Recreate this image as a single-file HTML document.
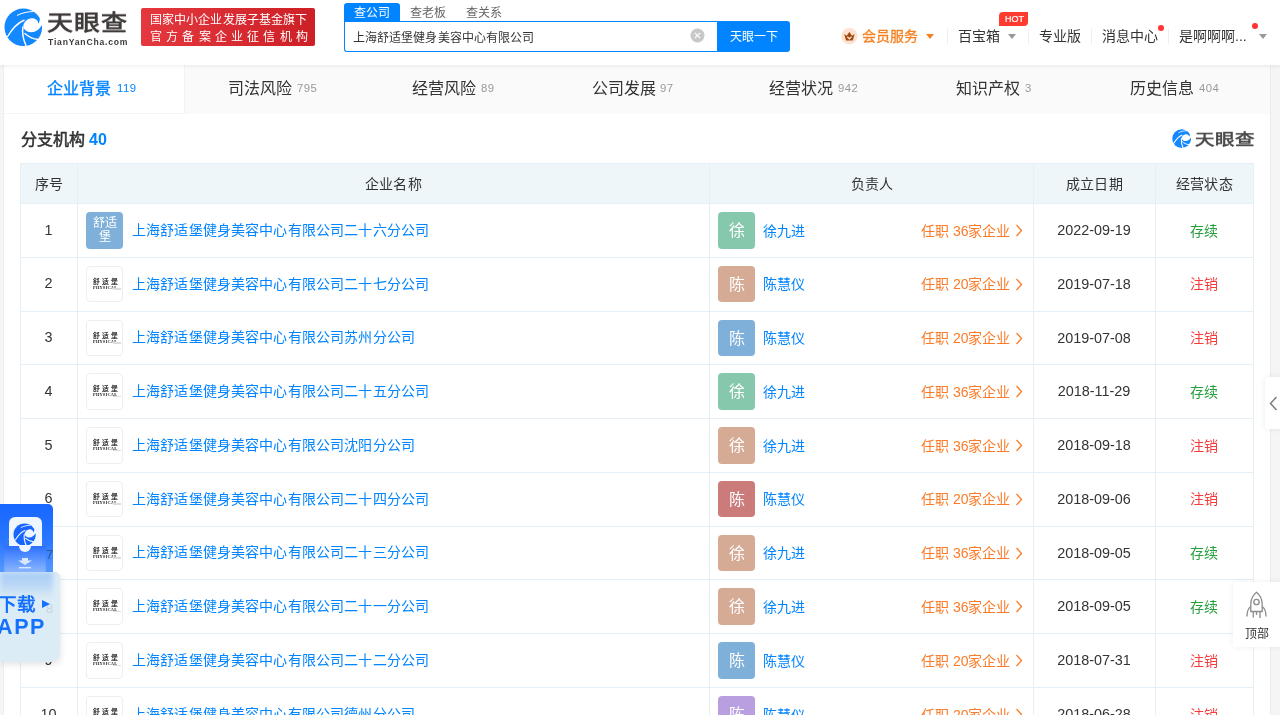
<!DOCTYPE html>
<html lang="zh-CN">
<head>
<meta charset="utf-8">
<style>
*{box-sizing:border-box;margin:0;padding:0}
html,body{width:1280px;height:715px;overflow:hidden}
body{position:relative;background:#f5f5f5;font-family:"Liberation Sans",sans-serif;color:#333;font-size:14px}
.abs{position:absolute}
.t{position:absolute;white-space:nowrap;line-height:1;will-change:transform}
#hdr{position:absolute;left:0;top:0;width:1280px;height:65px;background:#fff;z-index:2;box-shadow:0 1px 4px rgba(0,0,0,.08)}
#card{position:absolute;left:3px;top:65px;width:1268px;height:660px;background:#fff;border-left:1px solid #efefef;border-right:1px solid #ececec}
.tabbg{position:absolute;top:65px;height:48px;background:#fafafa}
.tn{font-size:16px;color:#333}
.tc{font-size:11.3px;color:#999;letter-spacing:.5px}
.hl{position:absolute;height:1px;background:#e6eef6}
.vl{position:absolute;width:1px;background:#e6eef6}
.hd{font-size:14px;color:#333}
.logo2{position:absolute;width:37px;height:36.5px;border:1px solid #eee;border-radius:4px;background:#fff}
.av{position:absolute;width:37px;height:36.5px;border-radius:4px}
.avt{position:absolute;left:0;width:37px;text-align:center;font-size:16px;color:#fff;line-height:1;will-change:transform}
.cn{font-size:14px;color:#0084ff}
.pn{font-size:14px;color:#0084ff}
.rz{font-size:14px;color:#fc7b28}
.dt{font-size:14.4px;color:#333}
.st{font-size:14px}
</style>
</head>
<body>
<div id="hdr">
  <svg class="abs" style="left:2px;top:6px" width="44" height="44" viewBox="0 0 44 44">
    <circle cx="21.3" cy="21.3" r="18.8" fill="#1388ff"/>
    <path d="M21.3,20 C21.8,16 25,12.8 30,12.3 C33.5,12.2 36,14.5 36.4,17.7 C37.3,16.5 37.8,14.5 37.8,12.7 L42,11 L42,19.4 L39.6,19.4 C37.5,23 34,26 29,26.2 C25,26.2 21.8,24 21.3,20 Z" fill="#fff"/>
    <path d="M5.3,31 C10,23 15,17 22.5,14" stroke="#fff" stroke-width="1.4" fill="none"/>
    <path d="M21,20.5 C20,26 21,33 24.2,40" stroke="#fff" stroke-width="1.5" fill="none"/>
    <path d="M22.5,27.3 C26,30.5 31,33 36.5,33.5" stroke="#fff" stroke-width="1.4" fill="none"/>
    <path d="M15,9.5 C20,6.8 26,5.6 31.5,5.5" stroke="#fff" stroke-width="1" fill="none"/>
  </svg>
  <div class="t" style="left:47px;top:8px;font-size:26px;font-weight:900;color:#3f3b3a;letter-spacing:1px;transform:scaleY(.84);transform-origin:0 0;top:11.5px">天眼查</div>
  <div class="t" style="left:48px;top:38px;font-size:8.6px;font-weight:bold;color:#3f3b3a;letter-spacing:.8px">TianYanCha.com</div>
  <div class="abs" style="left:141px;top:8px;width:174px;height:38px;border-radius:2px;background:linear-gradient(90deg,#e4383e,#cc1f26)">
    <div class="t" style="left:8.5px;top:6px;font-size:12px;color:#fff;letter-spacing:0.1px">国家中小企业发展子基金旗下</div>
    <div class="t" style="left:8.5px;top:23px;font-size:12px;color:#fff;letter-spacing:4.2px">官方备案企业征信机构</div>
  </div>
  <div class="abs" style="left:344px;top:3px;width:56px;height:19px;background:#0084ff;border-radius:3px 3px 0 0"></div>
  <div class="t" style="left:353.5px;top:6.5px;font-size:12px;color:#fff">查公司</div>
  <div class="t" style="left:409.5px;top:6.7px;font-size:12px;color:#666">查老板</div>
  <div class="t" style="left:465.5px;top:6.7px;font-size:12px;color:#666">查关系</div>
  <div class="abs" style="left:344px;top:21px;width:374px;height:31px;border:1px solid #0084ff;border-right:0;border-radius:0 0 0 3px;background:#fff"></div>
  <div class="t" style="left:353px;top:32px;font-size:12px;letter-spacing:.08px;color:#333">上海舒适堡健身美容中心有限公司</div>
  <svg class="abs" style="left:690px;top:28px" width="15" height="15" viewBox="0 0 15 15"><circle cx="7.5" cy="7.5" r="7" fill="#c8c8c8"/><path d="M4.8,4.8 L10.2,10.2 M10.2,4.8 L4.8,10.2" stroke="#fff" stroke-width="1.2"/></svg>
  <div class="abs" style="left:717px;top:21px;width:73px;height:31px;background:#0084ff;border-radius:0 3px 3px 0"></div>
  <div class="t" style="left:729.5px;top:30.5px;font-size:12px;color:#fff">天眼一下</div>

  <svg class="abs" style="left:841px;top:28px" width="17" height="17" viewBox="0 0 17 17"><circle cx="8.4" cy="8.25" r="8.2" fill="#fde3cf"/><path d="M3.2,6 L5.7,7.7 L8.4,3.9 L11.1,7.7 L13.6,6 L11.8,12.5 L5,12.5 Z" fill="#a04a12"/><path d="M6.3,8.8 L8.4,10.8 L10.5,8.8" stroke="#fde3cf" stroke-width="1.2" fill="none"/></svg>
  <div class="t" style="left:862px;top:29px;font-size:14px;color:#f5801e;-webkit-text-stroke:0.3px #f5801e">会员服务</div>
  <div class="abs" style="left:926px;top:34px;width:0;height:0;border-left:4.5px solid transparent;border-right:4.5px solid transparent;border-top:5px solid #f5801e"></div>
  <div class="abs" style="left:947px;top:29px;width:1px;height:15px;background:#eee"></div>
  <div class="t" style="left:958px;top:29px;font-size:14px;color:#333">百宝箱</div>
  <div class="abs" style="left:1008px;top:34px;width:0;height:0;border-left:4px solid transparent;border-right:4px solid transparent;border-top:5px solid #999"></div>
  <div class="abs" style="left:999px;top:12px;width:29px;height:14px;background:#ff3b30;border-radius:4px 0 4px 0"></div>
  <div class="t" style="left:1004.5px;top:14.5px;font-size:9px;color:#fff;-webkit-text-stroke:.2px #fff">HOT</div>
  <div class="abs" style="left:1028px;top:29px;width:1px;height:15px;background:#eee"></div>
  <div class="t" style="left:1039px;top:29px;font-size:14px;color:#333">专业版</div>
  <div class="abs" style="left:1091px;top:29px;width:1px;height:15px;background:#eee"></div>
  <div class="t" style="left:1102px;top:29px;font-size:14px;color:#333">消息中心</div>
  <div class="abs" style="left:1158px;top:25px;width:6px;height:6px;border-radius:50%;background:#f33"></div>
  <div class="abs" style="left:1168px;top:29px;width:1px;height:15px;background:#eee"></div>
  <div class="t" style="left:1179px;top:29px;font-size:14px;color:#333">是啊啊啊...</div>
  <div class="abs" style="left:1252px;top:23px;width:6px;height:6px;border-radius:50%;background:#f33"></div>
  <div class="abs" style="left:1259px;top:34px;width:0;height:0;border-left:4px solid transparent;border-right:4px solid transparent;border-top:5px solid #999"></div>
</div>
<div id="card"></div>
<div class="tabbg" style="left:184px;width:1086px;height:49px"></div>
<div class="abs" style="left:4px;top:113px;width:181px;height:1px;background:#f4f4f4"></div>
<div class="abs" style="left:184px;top:65px;width:1px;height:49px;background:#f3f3f3"></div>

<div class="t tn" style="left:46.8px;top:81.2px;color:#0084ff;-webkit-text-stroke:0.35px #0084ff;">企业背景</div>
<div class="t tc" style="left:117.3px;top:83.3px;color:#0084ff">119</div>
<div class="t tn" style="left:228.0px;top:81.2px;color:#333;">司法风险</div>
<div class="t tc" style="left:296.6px;top:83.3px;color:#999">795</div>
<div class="t tn" style="left:411.9px;top:81.2px;color:#333;">经营风险</div>
<div class="t tc" style="left:480.6px;top:83.3px;color:#999">89</div>
<div class="t tn" style="left:592.3px;top:81.2px;color:#333;">公司发展</div>
<div class="t tc" style="left:660.3px;top:83.3px;color:#999">97</div>
<div class="t tn" style="left:768.8px;top:81.2px;color:#333;">经营状况</div>
<div class="t tc" style="left:837.5px;top:83.3px;color:#999">942</div>
<div class="t tn" style="left:955.9px;top:81.2px;color:#333;">知识产权</div>
<div class="t tc" style="left:1025.0px;top:83.3px;color:#999">3</div>
<div class="t tn" style="left:1130.2px;top:81.2px;color:#333;">历史信息</div>
<div class="t tc" style="left:1199.0px;top:83.3px;color:#999">404</div>
<div class="t" style="left:21px;top:131.5px;font-size:16px;color:#333;-webkit-text-stroke:0.55px #333">分支机构</div>
<div class="t" style="left:89px;top:132px;font-size:16px;font-weight:bold;color:#0084ff">40</div>
<svg class="abs" style="left:1171px;top:128px" width="22" height="22" viewBox="0 0 44 44">
    <circle cx="21.3" cy="21.3" r="18.8" fill="#1388ff"/>
    <path d="M21.3,20 C21.8,16 25,12.8 30,12.3 C33.5,12.2 36,14.5 36.4,17.7 C37.3,16.5 37.8,14.5 37.8,12.7 L42,11 L42,19.4 L39.6,19.4 C37.5,23 34,26 29,26.2 C25,26.2 21.8,24 21.3,20 Z" fill="#fff"/>
    <path d="M5.3,31 C10,23 15,17 22.5,14" stroke="#fff" stroke-width="2.2" fill="none"/>
    <path d="M21,20.5 C20,26 21,33 24.2,40" stroke="#fff" stroke-width="2.2" fill="none"/>
    <path d="M22.5,27.3 C26,30.5 31,33 36.5,33.5" stroke="#fff" stroke-width="2" fill="none"/>
    <path d="M15,9.5 C20,6.8 26,5.6 31.5,5.5" stroke="#fff" stroke-width="1.6" fill="none"/>
  </svg>
<div class="t" style="left:1194.5px;top:132px;font-size:19.5px;font-weight:900;color:#4a4a4a;letter-spacing:-.2px;transform:scaleY(.82);transform-origin:0 0">天眼查</div>
<div class="abs" style="left:20px;top:163px;width:1234px;height:40px;background:#eef6fa"></div>
<div class="hl" style="left:20px;top:163px;width:1234px"></div>
<div class="vl" style="left:20px;top:163px;height:560px"></div>
<div class="vl" style="left:77px;top:163px;height:560px"></div>
<div class="vl" style="left:709px;top:163px;height:560px"></div>
<div class="vl" style="left:1033px;top:163px;height:560px"></div>
<div class="vl" style="left:1155px;top:163px;height:560px"></div>
<div class="vl" style="left:1253px;top:163px;height:560px"></div>
<div class="hl" style="left:20px;top:203.00px;width:1234px"></div>
<div class="hl" style="left:20px;top:256.78px;width:1234px"></div>
<div class="hl" style="left:20px;top:310.56px;width:1234px"></div>
<div class="hl" style="left:20px;top:364.34px;width:1234px"></div>
<div class="hl" style="left:20px;top:418.12px;width:1234px"></div>
<div class="hl" style="left:20px;top:471.90px;width:1234px"></div>
<div class="hl" style="left:20px;top:525.68px;width:1234px"></div>
<div class="hl" style="left:20px;top:579.46px;width:1234px"></div>
<div class="hl" style="left:20px;top:633.24px;width:1234px"></div>
<div class="hl" style="left:20px;top:687.02px;width:1234px"></div>
<div class="hl" style="left:20px;top:740.80px;width:1234px"></div>
<div class="t hd" style="left:35.3px;top:176.7px;letter-spacing:.2px">序号</div>
<div class="t hd" style="left:364.5px;top:176.7px;letter-spacing:.2px">企业名称</div>
<div class="t hd" style="left:851.0px;top:176.7px;letter-spacing:.2px">负责人</div>
<div class="t hd" style="left:1066.1px;top:176.7px;letter-spacing:.2px">成立日期</div>
<div class="t hd" style="left:1176.1px;top:176.7px;letter-spacing:.2px">经营状态</div>
<div class="t" style="left:20px;width:57px;text-align:center;top:222.50px;font-size:14.4px;color:#333">1</div>
<div class="av" style="left:86px;top:212.00px;background:#7fb0d9"></div>
<div class="t" style="left:86px;width:37px;text-align:center;top:216.00px;font-size:12px;line-height:14px;color:#fff;white-space:normal;padding:0 5px">舒适堡</div>
<div class="t cn" style="left:131.5px;top:222.80px;font-size:14px;letter-spacing:.15px">上海舒适堡健身美容中心有限公司二十六分公司</div>
<div class="av" style="left:718px;top:212.00px;background:#86c8ab"></div>
<div class="avt" style="left:718px;top:223.00px">徐</div>
<div class="t pn" style="left:762.5px;top:223.50px">徐九进</div>
<div class="t rz" style="left:920.5px;top:223.50px">任职 36家企业</div>
<svg class="abs" style="left:1015px;top:224.00px" width="8" height="13" viewBox="0 0 8 13"><path d="M1.5,1 L6.5,6.5 L1.5,12" stroke="#fc7b28" stroke-width="1.3" fill="none"/></svg>
<div class="t dt" style="left:1033px;width:122px;text-align:center;top:223.00px">2022-09-19</div>
<div class="t st" style="left:1155px;width:98px;text-align:center;top:223.50px;color:#26a03f">存续</div>
<div class="t" style="left:20px;width:57px;text-align:center;top:276.28px;font-size:14.4px;color:#333">2</div>
<div class="logo2" style="left:86px;top:265.78px"></div>
<div class="t" style="left:92.5px;top:278.78px;font-size:6.8px;color:#111;letter-spacing:2.2px;-webkit-text-stroke:.15px #111">舒适堡</div>
<div class="t" style="left:92.5px;top:285.78px;font-size:4.4px;font-weight:bold;color:#222;font-family:'Liberation Serif',serif;letter-spacing:.2px">PHYSICAL</div>
<div class="abs" style="left:113px;top:288.28px;width:8px;height:1.5px;background:#ddd"></div>
<div class="t cn" style="left:131.5px;top:276.58px;font-size:14px;letter-spacing:.15px">上海舒适堡健身美容中心有限公司二十七分公司</div>
<div class="av" style="left:718px;top:265.78px;background:#d5ab96"></div>
<div class="avt" style="left:718px;top:276.78px">陈</div>
<div class="t pn" style="left:762.5px;top:277.28px">陈慧仪</div>
<div class="t rz" style="left:920.5px;top:277.28px">任职 20家企业</div>
<svg class="abs" style="left:1015px;top:277.78px" width="8" height="13" viewBox="0 0 8 13"><path d="M1.5,1 L6.5,6.5 L1.5,12" stroke="#fc7b28" stroke-width="1.3" fill="none"/></svg>
<div class="t dt" style="left:1033px;width:122px;text-align:center;top:276.78px">2019-07-18</div>
<div class="t st" style="left:1155px;width:98px;text-align:center;top:277.28px;color:#f43c3c">注销</div>
<div class="t" style="left:20px;width:57px;text-align:center;top:330.06px;font-size:14.4px;color:#333">3</div>
<div class="logo2" style="left:86px;top:319.56px"></div>
<div class="t" style="left:92.5px;top:332.56px;font-size:6.8px;color:#111;letter-spacing:2.2px;-webkit-text-stroke:.15px #111">舒适堡</div>
<div class="t" style="left:92.5px;top:339.56px;font-size:4.4px;font-weight:bold;color:#222;font-family:'Liberation Serif',serif;letter-spacing:.2px">PHYSICAL</div>
<div class="abs" style="left:113px;top:342.06px;width:8px;height:1.5px;background:#ddd"></div>
<div class="t cn" style="left:131.5px;top:330.36px;font-size:14px;letter-spacing:.15px">上海舒适堡健身美容中心有限公司苏州分公司</div>
<div class="av" style="left:718px;top:319.56px;background:#7fb0d9"></div>
<div class="avt" style="left:718px;top:330.56px">陈</div>
<div class="t pn" style="left:762.5px;top:331.06px">陈慧仪</div>
<div class="t rz" style="left:920.5px;top:331.06px">任职 20家企业</div>
<svg class="abs" style="left:1015px;top:331.56px" width="8" height="13" viewBox="0 0 8 13"><path d="M1.5,1 L6.5,6.5 L1.5,12" stroke="#fc7b28" stroke-width="1.3" fill="none"/></svg>
<div class="t dt" style="left:1033px;width:122px;text-align:center;top:330.56px">2019-07-08</div>
<div class="t st" style="left:1155px;width:98px;text-align:center;top:331.06px;color:#f43c3c">注销</div>
<div class="t" style="left:20px;width:57px;text-align:center;top:383.84px;font-size:14.4px;color:#333">4</div>
<div class="logo2" style="left:86px;top:373.34px"></div>
<div class="t" style="left:92.5px;top:386.34px;font-size:6.8px;color:#111;letter-spacing:2.2px;-webkit-text-stroke:.15px #111">舒适堡</div>
<div class="t" style="left:92.5px;top:393.34px;font-size:4.4px;font-weight:bold;color:#222;font-family:'Liberation Serif',serif;letter-spacing:.2px">PHYSICAL</div>
<div class="abs" style="left:113px;top:395.84px;width:8px;height:1.5px;background:#ddd"></div>
<div class="t cn" style="left:131.5px;top:384.14px;font-size:14px;letter-spacing:.15px">上海舒适堡健身美容中心有限公司二十五分公司</div>
<div class="av" style="left:718px;top:373.34px;background:#86c8ab"></div>
<div class="avt" style="left:718px;top:384.34px">徐</div>
<div class="t pn" style="left:762.5px;top:384.84px">徐九进</div>
<div class="t rz" style="left:920.5px;top:384.84px">任职 36家企业</div>
<svg class="abs" style="left:1015px;top:385.34px" width="8" height="13" viewBox="0 0 8 13"><path d="M1.5,1 L6.5,6.5 L1.5,12" stroke="#fc7b28" stroke-width="1.3" fill="none"/></svg>
<div class="t dt" style="left:1033px;width:122px;text-align:center;top:384.34px">2018-11-29</div>
<div class="t st" style="left:1155px;width:98px;text-align:center;top:384.84px;color:#26a03f">存续</div>
<div class="t" style="left:20px;width:57px;text-align:center;top:437.62px;font-size:14.4px;color:#333">5</div>
<div class="logo2" style="left:86px;top:427.12px"></div>
<div class="t" style="left:92.5px;top:440.12px;font-size:6.8px;color:#111;letter-spacing:2.2px;-webkit-text-stroke:.15px #111">舒适堡</div>
<div class="t" style="left:92.5px;top:447.12px;font-size:4.4px;font-weight:bold;color:#222;font-family:'Liberation Serif',serif;letter-spacing:.2px">PHYSICAL</div>
<div class="abs" style="left:113px;top:449.62px;width:8px;height:1.5px;background:#ddd"></div>
<div class="t cn" style="left:131.5px;top:437.92px;font-size:14px;letter-spacing:.15px">上海舒适堡健身美容中心有限公司沈阳分公司</div>
<div class="av" style="left:718px;top:427.12px;background:#d5ab96"></div>
<div class="avt" style="left:718px;top:438.12px">徐</div>
<div class="t pn" style="left:762.5px;top:438.62px">徐九进</div>
<div class="t rz" style="left:920.5px;top:438.62px">任职 36家企业</div>
<svg class="abs" style="left:1015px;top:439.12px" width="8" height="13" viewBox="0 0 8 13"><path d="M1.5,1 L6.5,6.5 L1.5,12" stroke="#fc7b28" stroke-width="1.3" fill="none"/></svg>
<div class="t dt" style="left:1033px;width:122px;text-align:center;top:438.12px">2018-09-18</div>
<div class="t st" style="left:1155px;width:98px;text-align:center;top:438.62px;color:#f43c3c">注销</div>
<div class="t" style="left:20px;width:57px;text-align:center;top:491.40px;font-size:14.4px;color:#333">6</div>
<div class="logo2" style="left:86px;top:480.90px"></div>
<div class="t" style="left:92.5px;top:493.90px;font-size:6.8px;color:#111;letter-spacing:2.2px;-webkit-text-stroke:.15px #111">舒适堡</div>
<div class="t" style="left:92.5px;top:500.90px;font-size:4.4px;font-weight:bold;color:#222;font-family:'Liberation Serif',serif;letter-spacing:.2px">PHYSICAL</div>
<div class="abs" style="left:113px;top:503.40px;width:8px;height:1.5px;background:#ddd"></div>
<div class="t cn" style="left:131.5px;top:491.70px;font-size:14px;letter-spacing:.15px">上海舒适堡健身美容中心有限公司二十四分公司</div>
<div class="av" style="left:718px;top:480.90px;background:#cc7b7b"></div>
<div class="avt" style="left:718px;top:491.90px">陈</div>
<div class="t pn" style="left:762.5px;top:492.40px">陈慧仪</div>
<div class="t rz" style="left:920.5px;top:492.40px">任职 20家企业</div>
<svg class="abs" style="left:1015px;top:492.90px" width="8" height="13" viewBox="0 0 8 13"><path d="M1.5,1 L6.5,6.5 L1.5,12" stroke="#fc7b28" stroke-width="1.3" fill="none"/></svg>
<div class="t dt" style="left:1033px;width:122px;text-align:center;top:491.90px">2018-09-06</div>
<div class="t st" style="left:1155px;width:98px;text-align:center;top:492.40px;color:#f43c3c">注销</div>
<div class="t" style="left:20px;width:57px;text-align:center;top:545.18px;font-size:14.4px;color:#333">7</div>
<div class="logo2" style="left:86px;top:534.68px"></div>
<div class="t" style="left:92.5px;top:547.68px;font-size:6.8px;color:#111;letter-spacing:2.2px;-webkit-text-stroke:.15px #111">舒适堡</div>
<div class="t" style="left:92.5px;top:554.68px;font-size:4.4px;font-weight:bold;color:#222;font-family:'Liberation Serif',serif;letter-spacing:.2px">PHYSICAL</div>
<div class="abs" style="left:113px;top:557.18px;width:8px;height:1.5px;background:#ddd"></div>
<div class="t cn" style="left:131.5px;top:545.48px;font-size:14px;letter-spacing:.15px">上海舒适堡健身美容中心有限公司二十三分公司</div>
<div class="av" style="left:718px;top:534.68px;background:#d5ab96"></div>
<div class="avt" style="left:718px;top:545.68px">徐</div>
<div class="t pn" style="left:762.5px;top:546.18px">徐九进</div>
<div class="t rz" style="left:920.5px;top:546.18px">任职 36家企业</div>
<svg class="abs" style="left:1015px;top:546.68px" width="8" height="13" viewBox="0 0 8 13"><path d="M1.5,1 L6.5,6.5 L1.5,12" stroke="#fc7b28" stroke-width="1.3" fill="none"/></svg>
<div class="t dt" style="left:1033px;width:122px;text-align:center;top:545.68px">2018-09-05</div>
<div class="t st" style="left:1155px;width:98px;text-align:center;top:546.18px;color:#26a03f">存续</div>
<div class="t" style="left:20px;width:57px;text-align:center;top:598.96px;font-size:14.4px;color:#333">8</div>
<div class="logo2" style="left:86px;top:588.46px"></div>
<div class="t" style="left:92.5px;top:601.46px;font-size:6.8px;color:#111;letter-spacing:2.2px;-webkit-text-stroke:.15px #111">舒适堡</div>
<div class="t" style="left:92.5px;top:608.46px;font-size:4.4px;font-weight:bold;color:#222;font-family:'Liberation Serif',serif;letter-spacing:.2px">PHYSICAL</div>
<div class="abs" style="left:113px;top:610.96px;width:8px;height:1.5px;background:#ddd"></div>
<div class="t cn" style="left:131.5px;top:599.26px;font-size:14px;letter-spacing:.15px">上海舒适堡健身美容中心有限公司二十一分公司</div>
<div class="av" style="left:718px;top:588.46px;background:#d5ab96"></div>
<div class="avt" style="left:718px;top:599.46px">徐</div>
<div class="t pn" style="left:762.5px;top:599.96px">徐九进</div>
<div class="t rz" style="left:920.5px;top:599.96px">任职 36家企业</div>
<svg class="abs" style="left:1015px;top:600.46px" width="8" height="13" viewBox="0 0 8 13"><path d="M1.5,1 L6.5,6.5 L1.5,12" stroke="#fc7b28" stroke-width="1.3" fill="none"/></svg>
<div class="t dt" style="left:1033px;width:122px;text-align:center;top:599.46px">2018-09-05</div>
<div class="t st" style="left:1155px;width:98px;text-align:center;top:599.96px;color:#26a03f">存续</div>
<div class="t" style="left:20px;width:57px;text-align:center;top:652.74px;font-size:14.4px;color:#333">9</div>
<div class="logo2" style="left:86px;top:642.24px"></div>
<div class="t" style="left:92.5px;top:655.24px;font-size:6.8px;color:#111;letter-spacing:2.2px;-webkit-text-stroke:.15px #111">舒适堡</div>
<div class="t" style="left:92.5px;top:662.24px;font-size:4.4px;font-weight:bold;color:#222;font-family:'Liberation Serif',serif;letter-spacing:.2px">PHYSICAL</div>
<div class="abs" style="left:113px;top:664.74px;width:8px;height:1.5px;background:#ddd"></div>
<div class="t cn" style="left:131.5px;top:653.04px;font-size:14px;letter-spacing:.15px">上海舒适堡健身美容中心有限公司二十二分公司</div>
<div class="av" style="left:718px;top:642.24px;background:#7fb0d9"></div>
<div class="avt" style="left:718px;top:653.24px">陈</div>
<div class="t pn" style="left:762.5px;top:653.74px">陈慧仪</div>
<div class="t rz" style="left:920.5px;top:653.74px">任职 20家企业</div>
<svg class="abs" style="left:1015px;top:654.24px" width="8" height="13" viewBox="0 0 8 13"><path d="M1.5,1 L6.5,6.5 L1.5,12" stroke="#fc7b28" stroke-width="1.3" fill="none"/></svg>
<div class="t dt" style="left:1033px;width:122px;text-align:center;top:653.24px">2018-07-31</div>
<div class="t st" style="left:1155px;width:98px;text-align:center;top:653.74px;color:#f43c3c">注销</div>
<div class="t" style="left:20px;width:57px;text-align:center;top:706.52px;font-size:14.4px;color:#333">10</div>
<div class="logo2" style="left:86px;top:696.02px"></div>
<div class="t" style="left:92.5px;top:709.02px;font-size:6.8px;color:#111;letter-spacing:2.2px;-webkit-text-stroke:.15px #111">舒适堡</div>
<div class="t" style="left:92.5px;top:716.02px;font-size:4.4px;font-weight:bold;color:#222;font-family:'Liberation Serif',serif;letter-spacing:.2px">PHYSICAL</div>
<div class="abs" style="left:113px;top:718.52px;width:8px;height:1.5px;background:#ddd"></div>
<div class="t cn" style="left:131.5px;top:706.82px;font-size:14px;letter-spacing:.15px">上海舒适堡健身美容中心有限公司德州分公司</div>
<div class="av" style="left:718px;top:696.02px;background:#b99ee0"></div>
<div class="avt" style="left:718px;top:707.02px">陈</div>
<div class="t pn" style="left:762.5px;top:707.52px">陈慧仪</div>
<div class="t rz" style="left:920.5px;top:707.52px">任职 20家企业</div>
<svg class="abs" style="left:1015px;top:708.02px" width="8" height="13" viewBox="0 0 8 13"><path d="M1.5,1 L6.5,6.5 L1.5,12" stroke="#fc7b28" stroke-width="1.3" fill="none"/></svg>
<div class="t dt" style="left:1033px;width:122px;text-align:center;top:707.02px">2018-06-28</div>
<div class="t st" style="left:1155px;width:98px;text-align:center;top:707.52px;color:#f43c3c">注销</div>
<div class="abs" style="left:0;top:504px;width:53px;height:70px;border-radius:0 5px 0 0;background:linear-gradient(180deg,#1766ff 0%,#2a78ff 55%,#5a9bff 100%)"></div>
<svg class="abs" style="left:4px;top:537px" width="42" height="36" viewBox="0 0 42 36"><defs><linearGradient id="tray" x1="0" y1="0" x2="0" y2="1"><stop offset="0" stop-color="#3f7dff"/><stop offset=".25" stop-color="#2c72ff"/><stop offset="1" stop-color="#8db9ff"/></linearGradient></defs><path d="M4,1 L38,1 L41.5,9 L41.5,36 L0.5,36 L0.5,9 Z" fill="url(#tray)"/></svg>
<div class="abs" style="left:9px;top:517px;width:33px;height:29px;border-radius:6px 6px 0 0;background:#eef6ff"></div>
<svg class="abs" style="left:12px;top:522px" width="26" height="26" viewBox="0 0 44 44">
    <circle cx="21.3" cy="21.3" r="18.8" fill="#1766ff"/>
    <path d="M21.3,20 C21.8,16 25,12.8 30,12.3 C33.5,12.2 36,14.5 36.4,17.7 C37.3,16.5 37.8,14.5 37.8,12.7 L42,11 L42,19.4 L39.6,19.4 C37.5,23 34,26 29,26.2 C25,26.2 21.8,24 21.3,20 Z" fill="#eef6ff"/>
    <path d="M5.3,31 C10,23 15,17 22.5,14" stroke="#eef6ff" stroke-width="2" fill="none"/>
    <path d="M21,20.5 C20,26 21,33 24.2,40" stroke="#eef6ff" stroke-width="2" fill="none"/>
    <path d="M22.5,27.3 C26,30.5 31,33 36.5,33.5" stroke="#eef6ff" stroke-width="2" fill="none"/>
    <path d="M15,9.5 C20,6.8 26,5.6 31.5,5.5" stroke="#eef6ff" stroke-width="1.5" fill="none"/>
</svg>
<svg class="abs" style="left:4px;top:545px" width="42" height="28" viewBox="0 0 42 28"><defs><linearGradient id="tray2" x1="0" y1="0" x2="0" y2="1"><stop offset="0" stop-color="#2b70ff"/><stop offset="1" stop-color="#8fbaff"/></linearGradient></defs><rect x="0.5" y="1" width="41" height="27" fill="url(#tray2)"/></svg>
<div class="abs" style="left:18.5px;top:545px;width:12px;height:7px;border-radius:0 0 6px 6px;background:#eef6ff"></div>
<svg class="abs" style="left:17px;top:557px" width="16" height="13" viewBox="0 0 16 13"><path d="M5,1 L11,1 L11,3.5 L15,3.5 L8,8 L1,3.5 L5,3.5 Z" fill="#d8e8ff"/><rect x="2" y="10" width="12" height="1.4" fill="#d8e8ff"/></svg>
<div class="t" style="left:46px;top:548px;font-size:13px;color:#2b4a8c;opacity:.8">7</div>
<div class="abs" style="left:0;top:571.5px;width:59.5px;height:90.5px;border-radius:0 5px 9px 0;background:#dcecf6;box-shadow:1px 3px 6px rgba(0,0,0,.10);overflow:hidden"><div style="position:absolute;left:0;top:0;width:53px;height:26px;background:linear-gradient(180deg,#a9cdf7 0%,#b9d7f6 50%,rgba(220,236,246,0) 100%);filter:blur(2px)"></div></div>
<div class="t" style="left:46px;top:602px;font-size:13px;color:#c8d4de">8</div>
<div class="t" style="left:-2px;top:595.5px;font-size:18.5px;font-weight:bold;color:#1470ff">下载</div>
<div class="abs" style="left:42px;top:599.5px;width:0;height:0;border-top:4.5px solid transparent;border-bottom:4.5px solid transparent;border-left:8px solid #1470ff"></div>
<div class="t" style="left:-3px;top:616.5px;font-size:21.5px;font-weight:bold;color:#1470ff;letter-spacing:1.6px">APP</div>

<div class="abs" style="left:1265px;top:377px;width:20px;height:52px;background:#fff;border-radius:4px 0 0 4px;box-shadow:0 0 6px rgba(0,0,0,.08)"></div>
<svg class="abs" style="left:1269px;top:396px" width="9" height="15" viewBox="0 0 9 15"><path d="M7.5,1 L1.5,7.5 L7.5,14" stroke="#7a7a7a" stroke-width="1.4" fill="none"/></svg>
<div class="abs" style="left:1233px;top:582px;width:52px;height:65px;background:#fff;border-radius:4px;box-shadow:0 0 6px rgba(0,0,0,.07)"></div>
<svg class="abs" style="left:1245px;top:591px" width="24" height="29" viewBox="0 0 24 29"><path d="M11.5,1.3 C7.5,4.5 5.8,9 5.8,13.5 L5.8,20.5 L17.2,20.5 L17.2,13.5 C17.2,9 15.5,4.5 11.5,1.3 Z" stroke="#8c8c8c" stroke-width="1.3" fill="none"/><circle cx="11.5" cy="11" r="2.7" stroke="#8c8c8c" stroke-width="1.3" fill="none"/><path d="M5.8,15.5 C3,17.5 2,21 2,25.5 M17.2,15.5 C20,17.5 21,21 21,25.5 M8.3,20 L8.3,26.5 M11.5,20 L11.5,24 M15,20 L15,27" stroke="#8c8c8c" stroke-width="1.3" fill="none"/></svg>
<div class="t" style="left:1244.5px;top:627.5px;font-size:12px;color:#333">顶部</div>

</body></html>
